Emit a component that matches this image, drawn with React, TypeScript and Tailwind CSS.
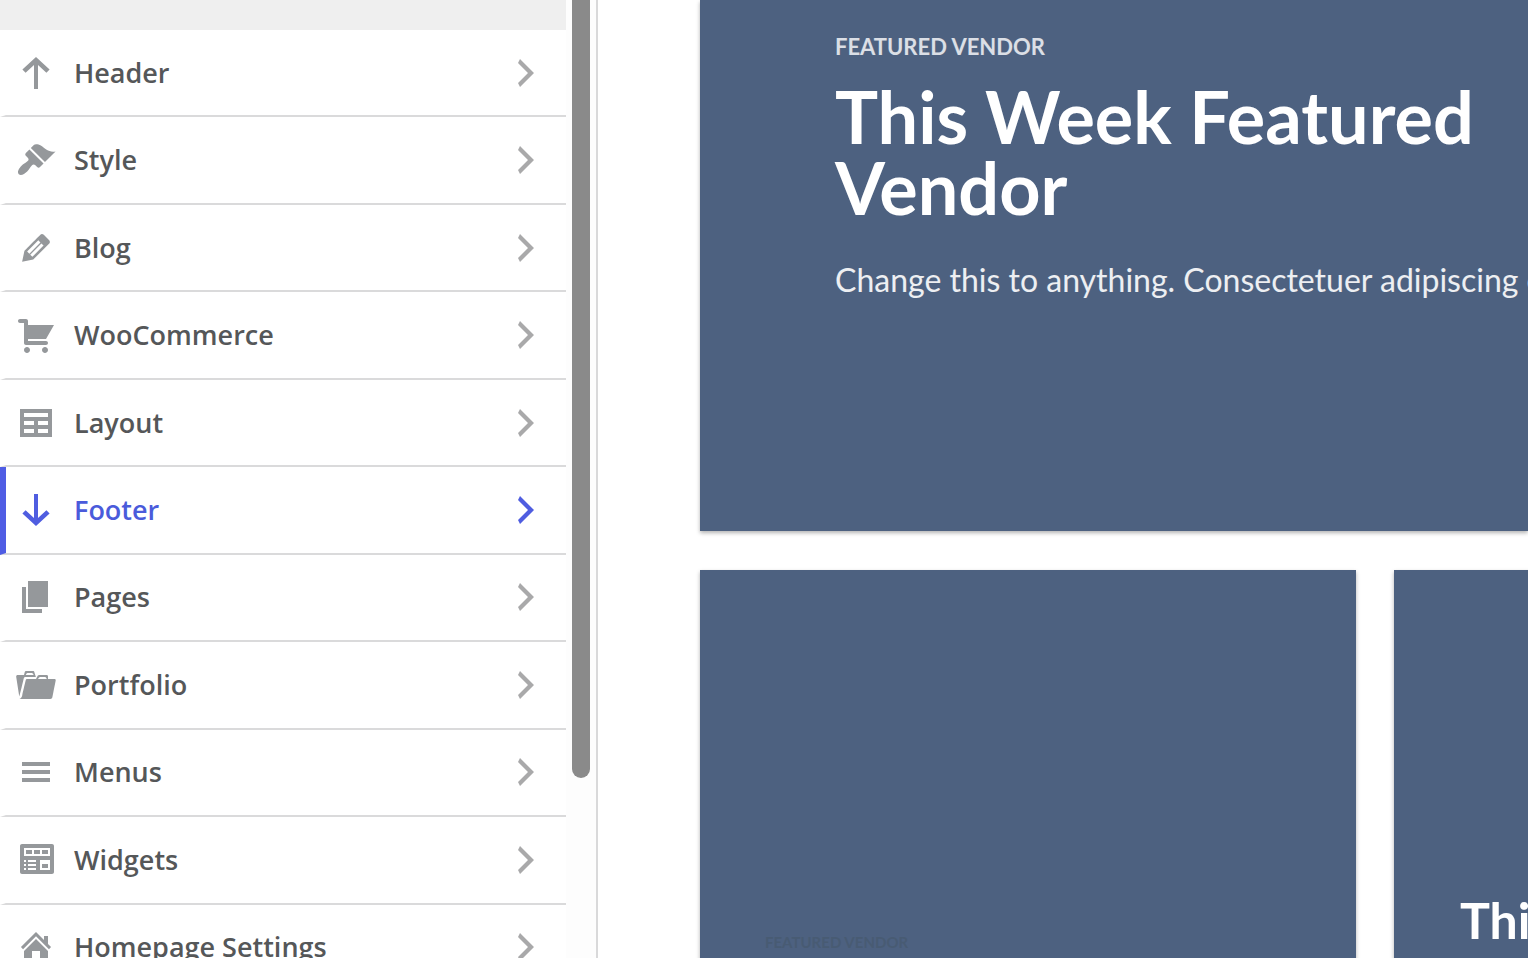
type MenuItem = { label: string; icon: string; active?: boolean };

const items: MenuItem[] = [
  {
    label: "Header",
    icon: "M10 2l6.8 6.2-1.6 1.7L11 6v12H9V6L4.8 9.9 3.2 8.2z",
  },
  {
    label: "Style",
    icon: "M14.48 11.06L7.41 3.99l1.5-1.5c.5-.56 2.3-.47 3.51.32 1.21.8 1.43 1.28 2.91 2.1 1.18.64 2.45 1.26 4.45.85zm-.71.71L6.7 4.7 4.93 6.47c-.39.39-.39 1.02 0 1.41l1.06 1.06c.39.39.39 1.03 0 1.42-.6.6-1.43 1.11-2.21 1.69-.35.26-.7.53-1.01.84C1.43 14.23.4 16.08 1.4 17.07c.99 1 2.84-.03 4.18-1.36.31-.31.58-.66.85-1.02.57-.78 1.08-1.61 1.69-2.21.39-.39 1.02-.39 1.41 0l1.06 1.06c.39.39 1.02.39 1.41 0z",
  },
  {
    label: "Blog",
    icon: "M13.89 3.39l2.71 2.72c.46.46.42 1.24.03 1.64l-8.01 8.02-5.56 1.16 1.16-5.58s7.6-7.63 7.99-8.03c.39-.39 1.22-.39 1.68.07zm-2.73 2.79l-5.59 5.61 1.11 1.11 5.54-5.65zm-2.97 8.23l5.58-5.6-1.07-1.08-5.59 5.6z",
  },
  {
    label: "WooCommerce",
    icon: "M6 13h9c.55 0 1 .45 1 1s-.45 1-1 1H5c-.55 0-1-.45-1-1V4H2c-.55 0-1-.45-1-1s.45-1 1-1h3c.55 0 1 .45 1 1v2h13l-4 7H6v1zm-.5 3c.83 0 1.5.67 1.5 1.5S6.33 19 5.5 19 4 18.33 4 17.5 4.67 16 5.5 16zm9 0c.83 0 1.5.67 1.5 1.5s-.67 1.5-1.5 1.5-1.5-.67-1.5-1.5.67-1.5 1.5-1.5z",
  },
  {
    label: "Layout",
    icon: "M18 17V3H2v14h16zM16 7H4V5h12v2zm-7 4H4V9h5v2zm7 0h-5V9h5v2zm-7 4H4v-2h5v2zm7 0h-5v-2h5v2z",
  },
  {
    label: "Footer",
    icon: "M10 18l6.8-6.2-1.6-1.7L11 14V2H9v12l-4.2-3.9-1.6 1.7z",
    active: true,
  },
  { label: "Pages", icon: "M6 15V2h10v13H6zm-1 1h8v2H3V5h2v11z" },
  {
    label: "Portfolio",
    icon: "M4 5H.78c-.37 0-.74.32-.69.84l1.56 9.99S3.5 8.47 3.86 6.7c.11-.53.61-.7.98-.7H10s-.7-2.08-.77-2.31C9.11 3.25 8.89 3 8.45 3H5.14c-.36 0-.7.23-.8.64C4.25 4.04 4 5 4 5zm4.88 0h-4s.42-1 .87-1h2.13c.48 0 1 1 1 1zM2.67 16.25c-.31.47-.76.75-1.26.75h15.73c.54 0 .92-.31 1.03-.83.44-2.19 1.68-8.44 1.68-8.44.07-.5-.3-.73-.62-.73H16V5.53c0-.16-.26-.53-.66-.53h-3.76c-.52 0-.87.58-.87.58L10 7H5.59c-.32 0-.63.19-.69.5 0 0-1.59 6.7-1.72 7.33-.07.37-.22.99-.51 1.42zM15.38 7H11s.58-1 1.13-1h2.29c.71 0 .96 1 .96 1z",
  },
  { label: "Menus", icon: "M17 7V5H3v2h14zm0 4V9H3v2h14zm0 4v-2H3v2h14z" },
  {
    label: "Widgets",
    icon: "M19 16V3c0-.55-.45-1-1-1H3c-.55 0-1 .45-1 1v13c0 .55.45 1 1 1h15c.55 0 1-.45 1-1zM4 4h13v4H4V4zm1 1v2h3V5H5zm4 0v2h3V5H9zm4 0v2h3V5h-3zM4 10h1v1H4zm2 0h4v1H6zm6 0h5v5h-5zm1 2v2h3v-2zM4 12h1v1H4zm2 0h4v1H6zm-2 2h1v1H4zm2 0h4v1H6z",
  },
  {
    label: "Homepage Settings",
    icon: "M16 8.5l1.53 1.53-1.06 1.06L10 4.6l-6.47 6.49-1.06-1.06L10 2.5l4 4v-2h2v4zm-6-2.46l6 5.99V18H4v-5.97zM12 17v-5H8v5h4z",
  },
];

function Glyph({ d, className }: { d: string; className: string }) {
  return (
    <svg viewBox="0 0 20 20" className={`size-10 shrink-0 ${className}`} fillRule="evenodd" aria-hidden="true">
      <path d={d} fill="currentColor" />
    </svg>
  );
}

function MenuRow({ label, icon, active }: MenuItem) {
  return (
    <li className="grid">
      <button
        type="button"
        className={`flex items-center border-b-2 border-l-[6px] border-b-[#dadadb] pr-5 pl-[10px] text-left ${
          active ? "border-l-[#4f5de4] text-[#4a5bdb]" : "border-l-white text-[#555759]"
        }`}
      >
        <Glyph d={icon} className={active ? "text-[#4f5de0]" : "text-[#95989b]"} />
        <span className="ml-[18px] flex-1 text-[27px] leading-9 font-semibold">{label}</span>
        <Glyph d="M6 15l5-5-5-5 1-2 7 7-7 7z" className={active ? "text-[#4f5de0]" : "text-[#a9a9aa]"} />
      </button>
    </li>
  );
}

export default function App() {
  return (
    <div className="flex h-screen overflow-hidden bg-white">
      <aside className="flex w-[598px] shrink-0 border-r-2 border-[#d9d9da] bg-[#fdfdfd] font-['Open_Sans','Noto_Sans',sans-serif]">
        <nav aria-label="Customizer" className="flex-1">
          <div className="h-[30px] bg-[#efefef]" />
          <ul className="grid h-[962px] auto-rows-fr bg-white">
            {items.map((item) => (
              <MenuRow key={item.label} {...item} />
            ))}
          </ul>
        </nav>
        <div className="w-[30px] pr-1.5 pl-1.5">
          <div className="h-[778px] rounded-b-full bg-[#8a8a8a]" />
        </div>
      </aside>

      <main className="min-w-0 flex-1 overflow-hidden pl-[102px] font-[Lato,sans-serif]">
        <section className="h-[531px] bg-[#4d6180] pt-[35px] pl-[135px] text-white shadow-[0_2px_4px_rgba(0,0,0,0.3)]">
          <p className="text-[22px] leading-6 font-bold text-white/80">FEATURED VENDOR</p>
          <h1 className="mt-[22px] text-[72px] leading-[71px] font-bold">This Week Featured Vendor</h1>
          <p className="mt-8 text-[32px] leading-[50px] whitespace-nowrap text-white/90">
            Change this to anything. Consectetuer adipiscing elit.
          </p>
        </section>
        <div className="mt-[39px] flex gap-[38px]">
          <section className="h-[531px] w-[656px] shrink-0 bg-[#4d6180] pt-[360px] pl-[65px] shadow-[0_2px_4px_rgba(0,0,0,0.3)]">
            <p className="text-[15px] leading-6 font-bold text-[#485b73]">FEATURED VENDOR</p>
          </section>
          <section className="h-[531px] w-[656px] shrink-0 bg-[#4d6180] pt-[320px] pl-[66px] shadow-[0_2px_4px_rgba(0,0,0,0.3)]">
            <h2 className="text-[50px] leading-[60px] font-bold text-white">This Week</h2>
          </section>
        </div>
      </main>
    </div>
  );
}
